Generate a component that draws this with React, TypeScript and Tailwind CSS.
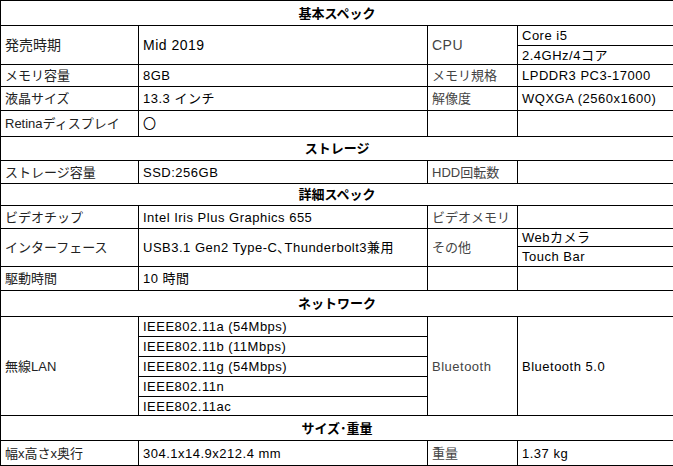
import React from "react";

const font = { fontFamily: '"Liberation Sans", "Noto Sans CJK JP", sans-serif' };

const td = "border border-black px-[4px] py-0 align-middle whitespace-nowrap";
const val = td + " tracking-[0.5px]";
const lbl = td + " text-[#222]";
const sub = td + " text-[#444]";

const Head = ({title, h}: { title: string; h: string }) => (
    <tr className={h}>
        <td colSpan={4} className={td + " text-center font-bold"}>{title}</td>
    </tr>
);

const App = () => {
    return <div className="w-[673px] h-[466px] bg-white overflow-hidden" style={font}>
        <table className="w-[673px] table-fixed border-collapse text-[13px] leading-none text-black">
            <colgroup>
                <col className="w-[138px]"/>
                <col className="w-[289px]"/>
                <col className="w-[90px]"/>
                <col className="w-[156px]"/>
            </colgroup>
            <tbody>
            <Head title="基本スペック" h="h-[25px]"/>
            <tr className="h-[20px]">
                <td rowSpan={2} className={lbl + " text-[14px]"}>発売時期</td>
                <td rowSpan={2} className={val + " text-[14px]"}>Mid 2019</td>
                <td rowSpan={2} className={sub + " text-[14px] tracking-[0.5px]"}>CPU</td>
                <td className={val}>Core i5</td>
            </tr>
            <tr className="h-[19px]">
                <td className={val}>2.4GHz/4コア</td>
            </tr>
            <tr className="h-[22px]">
                <td className={lbl}>メモリ容量</td>
                <td className={val}>8GB</td>
                <td className={sub}>メモリ規格</td>
                <td className={val}>LPDDR3 PC3-17000</td>
            </tr>
            <tr className="h-[24px]">
                <td className={lbl}>液晶サイズ</td>
                <td className={val}>13.3 インチ</td>
                <td className={sub}>解像度</td>
                <td className={val}>WQXGA (2560x1600)</td>
            </tr>
            <tr className="h-[26px]">
                <td className={lbl}>Retinaディスプレイ</td>
                <td className={td}>〇</td>
                <td className={sub}></td>
                <td className={td}></td>
            </tr>
            <Head title="ストレージ" h="h-[24px]"/>
            <tr className="h-[23px]">
                <td className={lbl}>ストレージ容量</td>
                <td className={val}>SSD:256GB</td>
                <td className={sub}>HDD回転数</td>
                <td className={td}></td>
            </tr>
            <Head title="詳細スペック" h="h-[22px]"/>
            <tr className="h-[23px]">
                <td className={lbl}>ビデオチップ</td>
                <td className={val}>Intel Iris Plus Graphics 655</td>
                <td className={sub}>ビデオメモリ</td>
                <td className={td}></td>
            </tr>
            <tr className="h-[18px]">
                <td rowSpan={2} className={lbl}>インターフェース</td>
                <td rowSpan={2} className={val}>USB3.1 Gen2 Type-C､Thunderbolt3兼用</td>
                <td rowSpan={2} className={sub}>その他</td>
                <td className={val}>Webカメラ</td>
            </tr>
            <tr className="h-[20px]">
                <td className={val}>Touch Bar</td>
            </tr>
            <tr className="h-[24px]">
                <td className={lbl}>駆動時間</td>
                <td className={val}>10 時間</td>
                <td className={sub}></td>
                <td className={td}></td>
            </tr>
            <Head title="ネットワーク" h="h-[26px]"/>
            <tr className="h-[20px]">
                <td rowSpan={5} className={lbl}>無線LAN</td>
                <td className={val}>IEEE802.11a (54Mbps)</td>
                <td rowSpan={5} className={sub + " tracking-[0.5px]"}>Bluetooth</td>
                <td rowSpan={5} className={val}>Bluetooth 5.0</td>
            </tr>
            <tr className="h-[20px]"><td className={val}>IEEE802.11b (11Mbps)</td></tr>
            <tr className="h-[20px]"><td className={val}>IEEE802.11g (54Mbps)</td></tr>
            <tr className="h-[20px]"><td className={val}>IEEE802.11n</td></tr>
            <tr className="h-[19px]"><td className={val}>IEEE802.11ac</td></tr>
            <Head title="サイズ･重量" h="h-[25px]"/>
            <tr className="h-[25px]">
                <td className={lbl}>幅x高さx奥行</td>
                <td className={val}>304.1x14.9x212.4 mm</td>
                <td className={sub}>重量</td>
                <td className={val}>1.37 kg</td>
            </tr>
            </tbody>
        </table>
    </div>
}

export default App
